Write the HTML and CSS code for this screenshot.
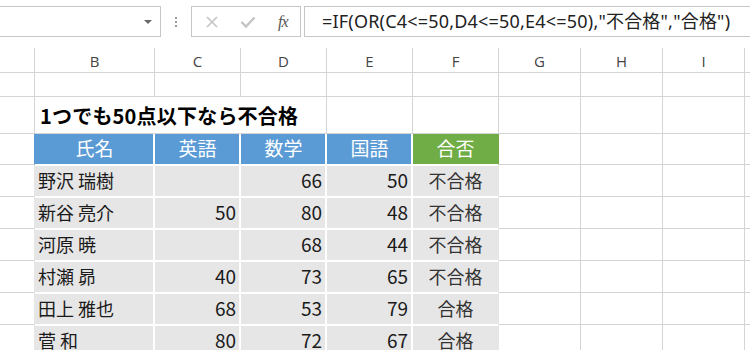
FILE: index.html
```html
<!DOCTYPE html>
<html lang="ja">
<head>
<meta charset="utf-8">
<link rel="stylesheet" href="styles.css">
</head>
<body>
<div class="app">
  <div class="fbar">
    <div class="namebox"><span class="caret"></span></div>
    <div class="grip"><i></i><i></i><i></i></div>
    <div class="btns">
      <svg class="ic" width="14" height="14" viewBox="0 0 14 14"><path d="M2 2 L12 12 M12 2 L2 12" stroke="#c4c4c4" stroke-width="1.6" fill="none"/></svg>
      <svg class="ic" width="16" height="14" viewBox="0 0 16 14"><path d="M1.5 7 L6 11.5 L14.5 2.5" stroke="#c4c4c4" stroke-width="2.4" fill="none"/></svg>
      <span class="fx">fx</span>
    </div>
    <div class="formula">=IF(OR(C4&lt;=50,D4&lt;=50,E4&lt;=50),"不合格","合格")</div>
  </div>
  <div class="sheet">
    <div class="c hd"></div><div class="c hd">B</div><div class="c hd">C</div><div class="c hd">D</div><div class="c hd">E</div><div class="c hd">F</div><div class="c hd">G</div><div class="c hd">H</div><div class="c hd">I</div><div class="c hd"></div>

    <div class="c"></div><div class="c"></div><div class="c"></div><div class="c"></div><div class="c"></div><div class="c"></div><div class="c"></div><div class="c"></div><div class="c"></div><div class="c"></div>

    <div class="c"></div><div class="c title">1つでも50点以下なら不合格</div><div class="c"></div><div class="c"></div><div class="c"></div><div class="c"></div><div class="c"></div><div class="c"></div>

    <div class="c edge-blue"></div><div class="c th">氏名</div><div class="c th">英語</div><div class="c th">数学</div><div class="c th">国語</div><div class="c th green">合否</div><div class="c"></div><div class="c"></div><div class="c"></div><div class="c"></div>

    <div class="c edge-gray"></div><div class="c td">野沢 瑞樹</div><div class="c td num"></div><div class="c td num">66</div><div class="c td num">50</div><div class="c td ctr last">不合格</div><div class="c"></div><div class="c"></div><div class="c"></div><div class="c"></div>

    <div class="c edge-gray"></div><div class="c td">新谷 亮介</div><div class="c td num">50</div><div class="c td num">80</div><div class="c td num">48</div><div class="c td ctr last">不合格</div><div class="c"></div><div class="c"></div><div class="c"></div><div class="c"></div>

    <div class="c edge-gray"></div><div class="c td">河原 暁</div><div class="c td num"></div><div class="c td num">68</div><div class="c td num">44</div><div class="c td ctr last">不合格</div><div class="c"></div><div class="c"></div><div class="c"></div><div class="c"></div>

    <div class="c edge-gray"></div><div class="c td">村瀬 昴</div><div class="c td num">40</div><div class="c td num">73</div><div class="c td num">65</div><div class="c td ctr last">不合格</div><div class="c"></div><div class="c"></div><div class="c"></div><div class="c"></div>

    <div class="c edge-gray"></div><div class="c td">田上 雅也</div><div class="c td num">68</div><div class="c td num">53</div><div class="c td num">79</div><div class="c td ctr last">合格</div><div class="c"></div><div class="c"></div><div class="c"></div><div class="c"></div>

    <div class="c edge-gray"></div><div class="c td">菅 和</div><div class="c td num">80</div><div class="c td num">72</div><div class="c td num">67</div><div class="c td ctr last">合格</div><div class="c"></div><div class="c"></div><div class="c"></div><div class="c"></div>
  </div>
</div>
</body>
</html>
```

FILE: styles.css
```css
html, body {
  margin: 0;
  padding: 0;
  background: #fff;
  overflow: hidden;
}
.app {
  width: 750px;
  height: 350px;
  overflow: hidden;
  font-family: "Noto Sans CJK JP", sans-serif;
}
.fbar {
  display: flex;
  align-items: stretch;
  height: 31px;
  padding: 6px 0 11px;
}
.namebox {
  box-sizing: border-box;
  width: 162px;
  margin-left: -1px;
  border: 1px solid #c6c6c6;
  position: relative;
  flex: none;
}
.caret {
  position: absolute;
  right: 8px;
  top: 13px;
  width: 0;
  height: 0;
  border-left: 4px solid transparent;
  border-right: 4px solid transparent;
  border-top: 4px solid #6a6a6a;
}
.grip {
  width: 30px;
  flex: none;
  display: flex;
  flex-direction: column;
  align-items: center;
  justify-content: center;
  gap: 2px;
}
.grip i {
  display: block;
  width: 2px;
  height: 2px;
  background: #9a9a9a;
}
.btns {
  box-sizing: border-box;
  width: 110px;
  flex: none;
  border: 1px solid #c6c6c6;
  display: flex;
  align-items: center;
  padding-left: 13px;
}
.btns .ic { flex: none; }
.btns .ic:nth-child(2) { margin-left: 21px; }
.fx {
  margin-left: 22px;
  font-family: "Liberation Serif", serif;
  font-style: italic;
  font-size: 16px;
  color: #555;
  letter-spacing: -1px;
}
.formula {
  box-sizing: border-box;
  margin-left: 3px;
  flex: 1;
  min-width: 500px;
  border: 1px solid #c6c6c6;
  border-right: none;
  padding-left: 17px;
  font-family: "Noto Sans", "Noto Sans CJK JP", sans-serif;
  font-size: 18px;
  letter-spacing: 0.2px;
  line-height: 29px;
  color: #222;
  white-space: nowrap;
}
.sheet {
  display: grid;
  grid-template-columns: 35px 120px 86px 86px 86px 86px 82px 82px 82px 30px;
  grid-template-rows: 25px 24px 37px 31px repeat(6, 32px);
}
.c {
  box-sizing: border-box;
  border-right: 1px solid #d4d4d4;
  border-bottom: 1px solid #d4d4d4;
  display: flex;
  align-items: center;
  white-space: nowrap;
  overflow: hidden;
  font-size: 18px;
  color: #111;
}
.hd {
  justify-content: center;
  font-family: "Open Sans", "Noto Sans", sans-serif;
  font-size: 15px;
  color: #444;
  padding-top: 1px;
}
.title {
  grid-column: span 3;
  font-weight: bold;
  font-size: 20px;
  letter-spacing: 0.2px;
  padding-left: 5px;
  color: #000;
}
.th {
  background: #5b9bd5;
  color: #fff;
  justify-content: center;
  border-color: #fff;
  box-shadow: inset -1px 0 0 #fff;
  padding-bottom: 4px;
  font-size: 19px;
}
.th.green {
  background: #70ad47;
  border-right-color: #70ad47;
  box-shadow: none;
}
.edge-blue { border-right-color: #5b9bd5; }
.edge-gray { border-right-color: #e7e6e6; }
.td {
  background: #e7e6e6;
  border-color: #fff;
  box-shadow: inset -1px 1px 0 #fff;
  padding-left: 3px;
  padding-bottom: 2px;
  color: #1a1a1a;
}
.td.num {
  justify-content: flex-end;
  padding-right: 4px;
  font-size: 19px;
}
.td.ctr {
  justify-content: center;
  padding-left: 0;
  color: #333;
}
.td.last {
  border-right-color: #e7e6e6;
  box-shadow: inset 0 1px 0 #fff;
}
```
